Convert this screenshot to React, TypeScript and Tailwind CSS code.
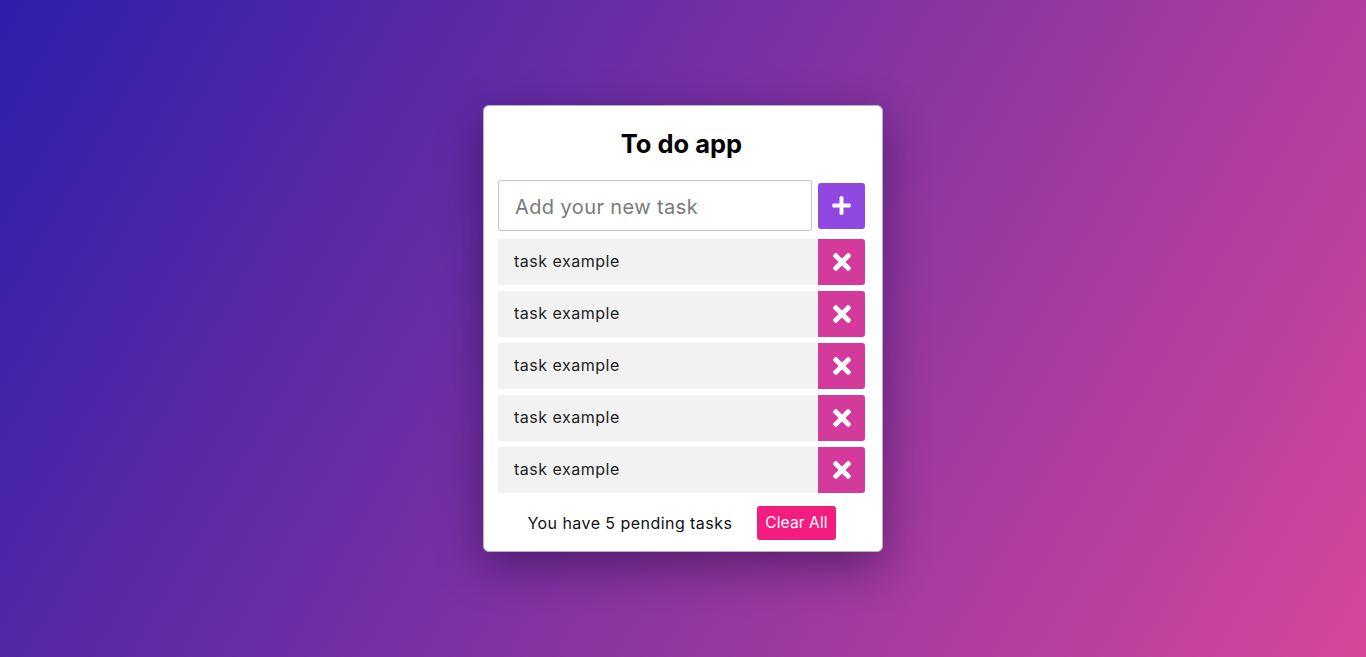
import React from "react";
import { FaPlus, FaTimes } from "react-icons/fa";

const tasks = ["task example", "task example", "task example", "task example", "task example"];

export default function App() {
  return (
    <div className="min-h-screen w-full flex items-center justify-center bg-[linear-gradient(120deg,#2c1ea9_0%,#d6479b_100%)]">
      <div
        className="w-[400px] h-[447px] bg-white rounded-[6px] border border-[#b8b0c8] shadow-[0_15px_45px_rgba(20,0,50,0.45)] flex flex-col pl-[14px] pr-[17px] pt-[24px]"
        style={{ fontFamily: "Inter, 'Noto Sans', sans-serif" }}
      >
        <h1 className="text-[25.5px] leading-[28px] font-bold text-black text-center tracking-[0px]">To do app</h1>
        <div className="flex items-center mt-[22px] gap-[6px]">
          <div className="flex-1 h-[51px] border border-[#c4c4c4] rounded-[3px] flex items-center pl-[16px] pt-[2px] text-[20px] tracking-[0.4px] text-[#7a7a7a]">
            Add your new task
          </div>
          <button className="w-[47px] h-[46px] rounded-[3px] bg-[#9148e1] flex items-center justify-center text-white">
            <FaPlus size={21} />
          </button>
        </div>
        <div className="flex flex-col gap-[6px] mt-[8px]">
          {tasks.map((t, i) => (
            <div key={i} className="flex h-[46px] bg-[#f2f2f2]">
              <div className="flex-1 flex items-center pl-[16px] pb-[2px] text-[16px] tracking-[0.5px] text-[#222]">{t}</div>
              <button className="w-[47px] h-full rounded-r-[3px] bg-[#d4399c] flex items-center justify-center text-white">
                <FaTimes size={26} />
              </button>
            </div>
          ))}
        </div>
        <div className="flex items-center justify-center gap-[25px] mt-[13px]">
          <span className="text-[16px] tracking-[0.45px] text-[#111]">You have 5 pending tasks</span>
          <button className="h-[34px] px-[8px] rounded-[3px] bg-[#f21d7f] text-white text-[15.5px] tracking-[0.1px]">Clear All</button>
        </div>
      </div>
    </div>
  );
}
